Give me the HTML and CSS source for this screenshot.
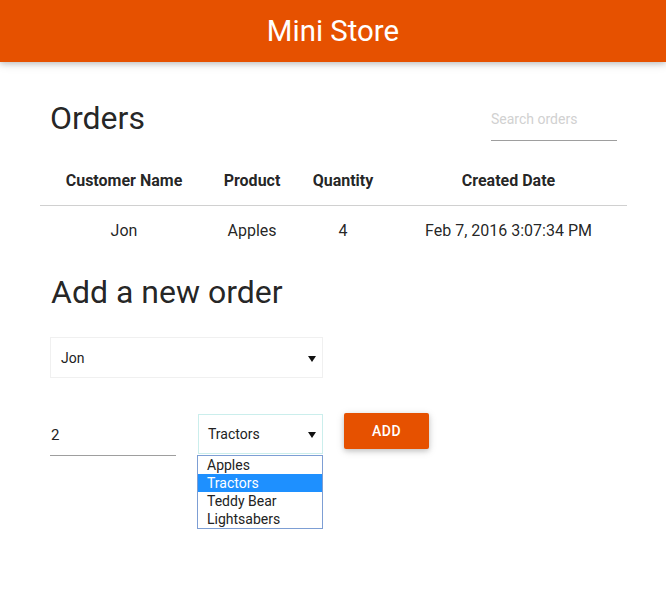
FILE: index.html
```html
<!DOCTYPE html>
<html lang="en">
<head>
<meta charset="utf-8">
<title>Mini Store</title>
<link rel="stylesheet" href="styles.css">
</head>
<body>
<header class="nav"><span class="brand">Mini Store</span></header>
<main class="container">
  <div class="orders-head">
    <h1 class="title">Orders</h1>
    <input class="search" type="text" placeholder="Search orders">
  </div>
  <table class="orders">
    <colgroup>
      <col class="c1"><col class="c2"><col class="c3"><col class="c4">
    </colgroup>
    <thead>
      <tr><th>Customer Name</th><th>Product</th><th>Quantity</th><th>Created Date</th></tr>
    </thead>
    <tbody>
      <tr><td>Jon</td><td>Apples</td><td>4</td><td>Feb 7, 2016 3:07:34 PM</td></tr>
    </tbody>
  </table>
  <h2 class="title add-title">Add a new order</h2>
  <div class="select customer"><span>Jon</span><i class="arrow"></i></div>
  <div class="row2">
    <input class="qty" type="text" value="2">
    <div class="product-col">
      <div class="select product"><span>Tractors</span><i class="arrow"></i></div>
      <div class="choices">
        <p class="choice">Apples</p>
        <p class="choice picked">Tractors</p>
        <p class="choice">Teddy Bear</p>
        <p class="choice">Lightsabers</p>
      </div>
    </div>
    <button class="btn" type="button">Add</button>
  </div>
</main>
</body>
</html>
```
FILE: styles.css
```css
* { box-sizing: border-box; }
html, body { margin: 0; padding: 0; background: #fff; }
body {
  font-family: Roboto, "Noto Sans", "Liberation Sans", sans-serif;
  color: rgba(0, 0, 0, 0.87);
}
.nav {
  height: 62px;
  background: #e65100;
  text-align: center;
  box-shadow: 0 2px 5px rgba(0, 0, 0, 0.16), 0 2px 10px rgba(0, 0, 0, 0.12);
}
.brand {
  color: #fff;
  font-size: 29.4px;
  line-height: 62px;
}
.container {
  padding: 0 39px 0 40px;
}
.orders-head {
  display: flex;
  justify-content: space-between;
  align-items: flex-start;
  margin-top: 36px;
  padding: 0 10px;
}
.title {
  margin: 0;
  font-size: 32px;
  font-weight: 400;
  line-height: 40px;
}
.search {
  width: 126px;
  height: 43px;
  border: none;
  border-bottom: 1px solid #9e9e9e;
  padding: 0;
  font-family: inherit;
  font-size: 14px;
  outline: none;
  background: transparent;
}
.search::placeholder { color: #d1d1d1; }
.orders {
  margin-top: 16px;
  width: 100%;
  border-collapse: collapse;
  table-layout: fixed;
}
.c1 { width: 168px; }
.c2 { width: 88px; }
.c3 { width: 94px; }
.c4 { width: auto; }
.orders th {
  height: 48px;
  padding: 0;
  font-size: 16px;
  font-weight: 700;
  text-align: center;
  border-bottom: 1px solid #d0d0d0;
}
.orders td {
  height: 51px;
  padding: 0;
  font-size: 16px;
  text-align: center;
}
.add-title { margin-top: 16px; padding-left: 11px; }
.select {
  position: relative;
  display: flex;
  align-items: center;
  border: 1px solid #f0f0f0;
  padding-left: 10px;
  font-size: 14px;
  color: #222;
  background: #fff;
}
.customer {
  margin: 25px 0 0 10px;
  width: 273px;
  height: 41px;
}
.arrow {
  position: absolute;
  right: 6px;
  top: 50%;
  margin-top: -2px;
  width: 0;
  height: 0;
  border-left: 4px solid transparent;
  border-right: 4px solid transparent;
  border-top: 6px solid #111;
}
.row2 {
  display: flex;
  align-items: flex-start;
  margin: 35px 0 0 10px;
}
.qty {
  margin-top: 1px;
  width: 126px;
  height: 42px;
  border: none;
  border-bottom: 1px solid #9e9e9e;
  padding: 0 0 0 1px;
  font-family: inherit;
  font-size: 15px;
  color: #222;
  outline: none;
  background: transparent;
}
.product-col {
  display: flex;
  flex-direction: column;
  margin: 1px 0 0 22px;
  width: 125px;
}
.product {
  width: 125px;
  height: 40px;
  border-color: #cbeeec;
  padding-left: 9px;
}
.choices {
  display: block;
  margin: 1px 0 0 -1px;
  width: 126px;
  border: 1px solid #7d9ed4;
  background: #fff;
}
.choice {
  display: block;
  margin: 0;
  height: 18px;
  padding-left: 9px;
  font-size: 14px;
  line-height: 18px;
  color: #222;
}
.picked {
  background: #1e90ff;
  color: #fff;
}
.btn {
  margin-left: 21px;
  width: 85px;
  height: 36px;
  border: none;
  border-radius: 2px;
  background: #e65100;
  color: #fff;
  font-family: inherit;
  font-size: 14px;
  font-weight: 500;
  letter-spacing: 0.5px;
  text-transform: uppercase;
  box-shadow: 0 2px 5px rgba(0, 0, 0, 0.16), 0 2px 10px rgba(0, 0, 0, 0.12);
  cursor: pointer;
}
```
